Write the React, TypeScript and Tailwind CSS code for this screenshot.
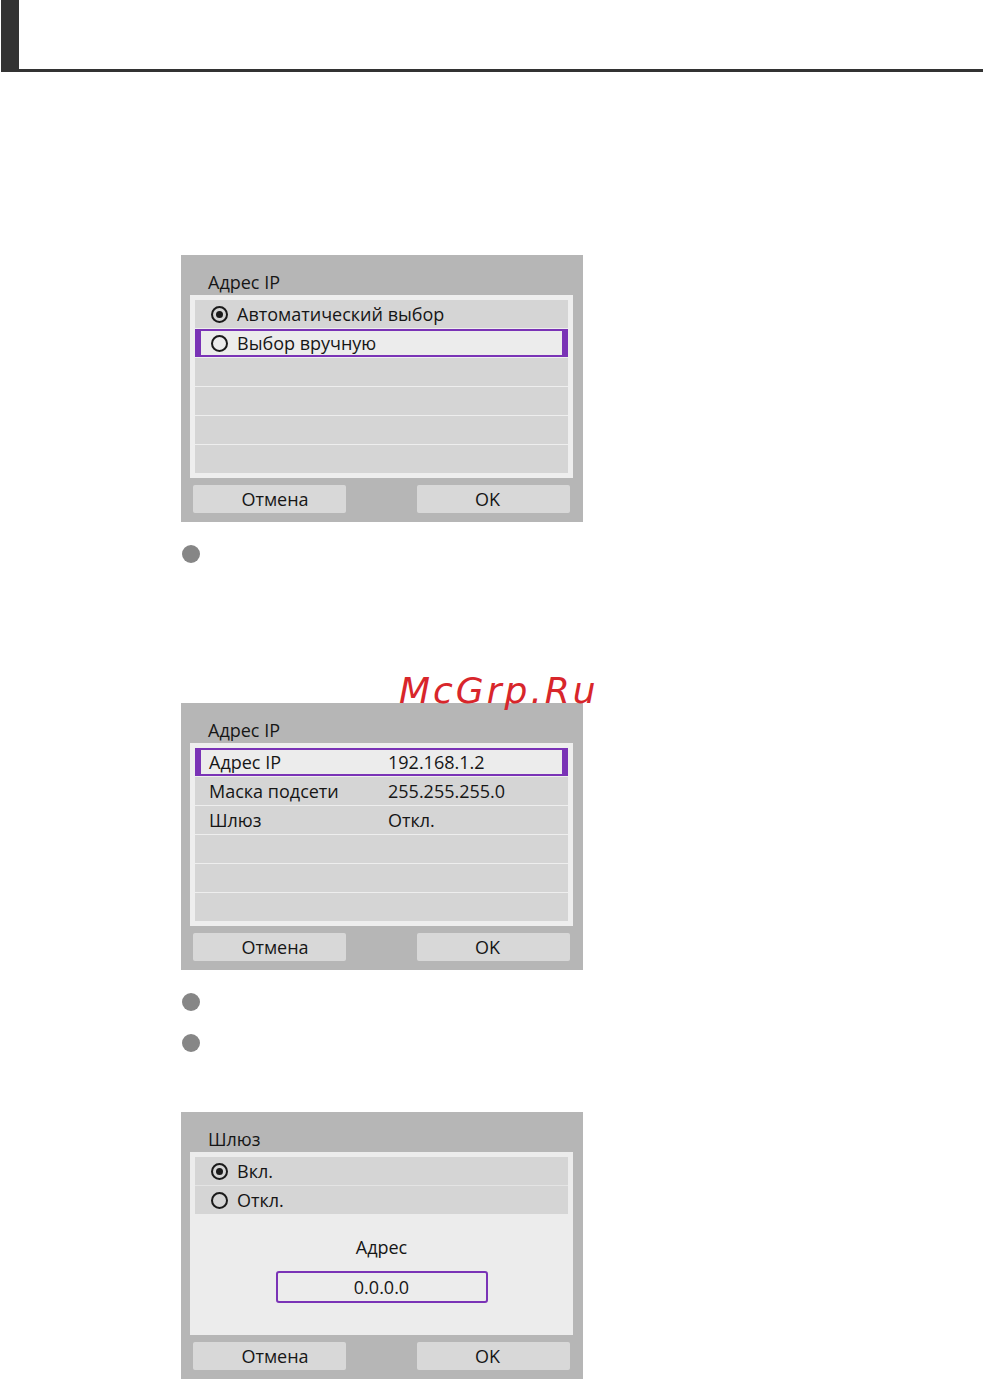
import React from 'react';

const ui = { fontFamily: '"Open Sans", "Noto Sans", sans-serif' };

function Radio({ checked }: { checked?: boolean }) {
    return (
        <span className="flex h-[17px] w-[17px] shrink-0 items-center justify-center rounded-full border-[2px] border-[#1a1a1a]">
            {checked && <span className="h-[7px] w-[7px] rounded-full bg-[#1a1a1a]" />}
        </span>
    );
}

type Row = {
    label?: string;
    value?: string;
    radio?: 'on' | 'off';
    selected?: boolean;
};

function ListRow({ row }: { row: Row }) {
    const base = 'flex h-[28px] items-center whitespace-nowrap text-[18px] font-medium text-[#161616]';
    const cls = row.selected
        ? `${base} border-x-[6px] border-y-[2px] border-[#7a33b6] bg-[#ececec] pl-[8px]`
        : `${base} bg-[#d5d5d5] pl-[14px]`;
    return (
        <div className={cls}>
            {row.radio && (
                <span className="mr-[9px] ml-[2px]">
                    <Radio checked={row.radio === 'on'} />
                </span>
            )}
            {row.label && (
                <span className={row.value ? 'w-[179px] leading-none' : 'leading-none'}>{row.label}</span>
            )}
            {row.value && <span className="leading-none">{row.value}</span>}
        </div>
    );
}

function Buttons() {
    return (
        <div className="flex justify-between px-[3px] pt-[7px] text-[18px] font-medium text-[#161616]">
            <div className="flex h-[28px] w-[153px] items-center justify-center rounded-[2px] bg-[#d8d8d8] pl-[11px]">
                Отмена
            </div>
            <div className="flex h-[28px] w-[153px] items-center justify-center rounded-[2px] bg-[#d8d8d8] pr-[12px]">
                OK
            </div>
        </div>
    );
}

function Panel({ title, children }: { title: string; children: React.ReactNode }) {
    return (
        <div className="w-[402px] bg-[#b6b6b6] pr-[10px] pb-[9px] pl-[9px]" style={ui}>
            <div className="h-[40px] pt-[15px] pl-[18px] text-[18px] leading-[24px] font-medium text-[#161616]">
                {title}
            </div>
            {children}
            <Buttons />
        </div>
    );
}

function ListBox({ rows, total = 6 }: { rows: Row[]; total?: number }) {
    const filled = [...rows, ...Array.from({ length: total - rows.length }, () => ({}))];
    return (
        <div className="flex flex-col gap-[1px] bg-[#eeeeee] p-[5px]">
            {filled.map((r, i) => (
                <ListRow key={i} row={r} />
            ))}
        </div>
    );
}

function Bullet() {
    return <div className="ml-[1px] h-[18px] w-[18px] rounded-full bg-[#868686]" />;
}

export default function App() {
    return (
        <div className="relative h-[1380px] w-[984px] overflow-hidden bg-white">
            {/* section heading frame */}
            <div className="mr-[1px] ml-[1px] h-[72px] border-b-[3px] border-l-[18px] border-[#333333]" />

            <div className="flex flex-col pl-[181px]">
                <div className="mt-[183px]">
                    <Panel title="Адрес IP">
                        <ListBox
                            rows={[
                                { radio: 'on', label: 'Автоматический выбор' },
                                { radio: 'off', label: 'Выбор вручную', selected: true },
                            ]}
                        />
                    </Panel>
                </div>
                <div className="mt-[23px]">
                    <Bullet />
                </div>

                <div className="mt-[140px]">
                    <Panel title="Адрес IP">
                        <ListBox
                            rows={[
                                { label: 'Адрес IP', value: '192.168.1.2', selected: true },
                                { label: 'Маска подсети', value: '255.255.255.0' },
                                { label: 'Шлюз', value: 'Откл.' },
                            ]}
                        />
                    </Panel>
                </div>
                <div className="mt-[23px]">
                    <Bullet />
                </div>
                <div className="mt-[23px]">
                    <Bullet />
                </div>

                <div className="mt-[60px]">
                    <Panel title="Шлюз">
                        <div className="flex h-[183px] flex-col bg-[#ececec] p-[5px]">
                            <div className="flex flex-col gap-[1px] bg-[#e4e4e4]">
                                <ListRow row={{ radio: 'on', label: 'Вкл.' }} />
                                <ListRow row={{ radio: 'off', label: 'Откл.' }} />
                            </div>
                            <div className="flex flex-col items-center text-[18px] font-medium text-[#161616]">
                                <div className="mt-[21px] leading-[24px]">Адрес</div>
                                <div className="mt-[12px] flex h-[32px] w-[212px] items-center justify-center rounded-[3px] border-[2px] border-[#7a33b6] bg-[#ececec]">
                                    0.0.0.0
                                </div>
                            </div>
                        </div>
                    </Panel>
                </div>
            </div>

            {/* site watermark */}
            <div
                className="absolute top-[673px] left-[399px] text-[36px] leading-[36px] tracking-[3px] text-[#d8262b] italic"
                style={{ fontFamily: '"DejaVu Sans", sans-serif' }}
            >
                McGrp.Ru
            </div>
        </div>
    );
}
